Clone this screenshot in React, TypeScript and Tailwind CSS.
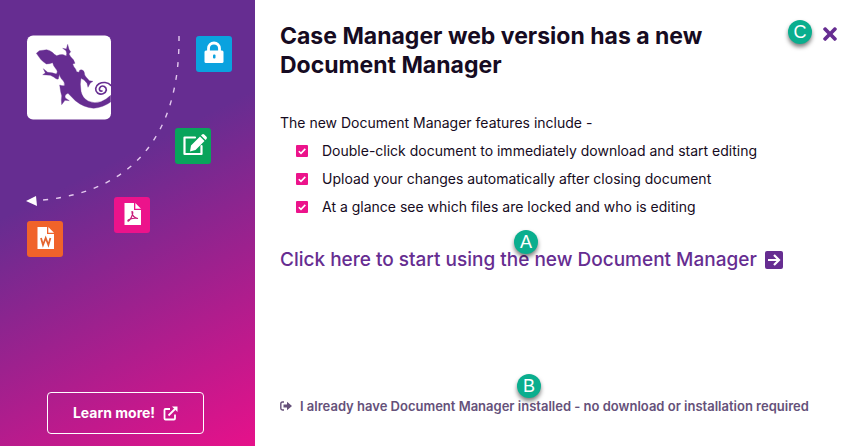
import type { ReactNode } from "react";
import { FaTimes } from "react-icons/fa";

interface IconTileProps {
  x: number;
  y: number;
  color: string;
  children: ReactNode;
}

const IconTile = ({ x, y, color, children }: IconTileProps) => (
  <g transform={`translate(${x} ${y})`}>
    <rect width="36" height="36" rx="3" fill={color} />
    {children}
  </g>
);

const FilePage = () => (
  <>
    <path d="M10.500 6h9.500v7h7v15h-16.500z" fill="#fff" />
    <path d="M21.300 6l5.700 5.700h-5.700z" fill="#fff" />
  </>
);

const Lizard = () => (
  <g transform="translate(26 34) scale(.33333)" fill="#662d91" stroke="#662d91" strokeLinejoin="round">
    <path d="M31 58L40 50Q52 49 62 47Q72 49 79 55Q85 62 92 65Q103 61 112 62L121 66L122 58L120 50L110 43L121 45L125 31L129 46L134 53L129 60L134 68Q143 75 147 88L140 90L144 99Q151 106 152 113L159 115Q159 108 165 107Q174 108 175 116Q175 124 180 129Q186 135 190 140L201 142L193 147L186 160L183 148Q178 138 165 133Q161 150 165 172Q169 192 186 201Q204 210 225 203Q241 197 254 184V204Q232 220 203 223Q172 220 148 200L126 178Q119 180 117 186L118 192L130 200L117 199L107 212L106 198Q109 184 104 173L101 153Q107 156 115 155Q118 144 106 134Q101 128 100 121L97 135Q91 137 83 129L73 124L50 122L58 117L52 104L65 115Q80 116 91 120Q97 112 90 105L83 95L80 86Q70 90 61 90L50 82L44 76Z" />
    <path
      d="M254 154C246 143 229 144 219 149C207 156 206 170 215 177C225 184 239 179 241 168C241 158 231 153 224 158C217 164 220 173 228 171"
      fill="none"
      strokeWidth="5"
      strokeLinecap="round"
    />
  </g>
);

const Illustration = () => (
  <svg viewBox="0 0 255 270" className="w-full" aria-hidden="true">
    <rect x="27" y="35.500" width="84" height="84" rx="6" fill="#fff" />
    <Lizard />
    <path
      d="M179 36C180 134 134 191 43 200"
      fill="none"
      stroke="#e3c9ee"
      strokeWidth="1.400"
      strokeDasharray="5 8"
    />
    <path d="M26 201l10-5 1 10z" fill="#fff" />
    <IconTile x={196} y={36} color="#0aa2df">
      <path d="M12.500 15V12.500a5.500 5.500 0 0 1 11 0V15" fill="none" stroke="#fff" strokeWidth="2.800" />
      <path d="M10 14.500h16q1.500 0 1.500 1.500v9.500q0 1.500-1.500 1.500h-16q-1.500 0-1.500-1.500v-9.500q0-1.500 1.500-1.500z" fill="#fff" />
      <rect x="17" y="18.500" width="2.500" height="4" rx="1" fill="#0aa2df" />
    </IconTile>
    <IconTile x={175} y={128} color="#08a45b">
      <path d="M20 9.500h-10.500v16.500h17v-8" fill="none" stroke="#fff" strokeWidth="2.200" strokeLinejoin="round" strokeLinecap="round" />
      <path d="M25 8.500l4.500 4.500-9 9-5.500 1.500 1-6zM26 7.500l1-1q1.200-1 2.200 0l2.300 2.300q1 1 0 2.200l-1 1z" fill="#fff" />
    </IconTile>
    <IconTile x={114} y={197} color="#ec138b">
      <FilePage />
      <path d="M18 14.500c1.500 0 .5 3-.5 5.500s-3 4.500-3.500 4c-1-1 4-3.500 10-2.500-3 0-6.500-3-6-7z" fill="none" stroke="#c71c78" strokeWidth="1.200" />
    </IconTile>
    <IconTile x={27} y={221} color="#f0632a">
      <FilePage />
      <path d="M14 17l2 7 2.700-7 2.700 7 2-7" fill="none" stroke="#e4652f" strokeWidth="1.800" />
    </IconTile>
  </svg>
);

const ExternalLinkIcon = () => (
  <svg viewBox="0 0 15 15" className="size-[15px]" fill="none" stroke="currentColor" strokeWidth="1.800" aria-hidden="true">
    <path d="M7 3H2.500Q1.500 3 1.500 4V12.500Q1.500 13.500 2.500 13.500H11Q12 13.500 12 12.500V8.500" />
    <path d="M5.500 9.500L12 3" />
    <path d="M9 .5h5.500V6z" fill="currentColor" stroke="none" />
  </svg>
);

const CheckIcon = () => (
  <svg viewBox="0 0 12 12" className="size-3 shrink-0" aria-hidden="true">
    <rect width="12" height="12" rx="1" fill="#ec138b" />
    <path d="M2.800 6.200l2.200 2.200 4.300-4.500" fill="none" stroke="#fff" strokeWidth="1.600" />
  </svg>
);

const ArrowSquareIcon = () => (
  <svg viewBox="0 0 18 18" className="size-[18px] shrink-0" aria-hidden="true">
    <rect width="18" height="18" rx="2" fill="currentColor" />
    <path d="M3 9h11M9 4l5 5-5 5" fill="none" stroke="#fff" strokeWidth="2.200" />
  </svg>
);

const SignOutIcon = () => (
  <svg viewBox="0 0 12 10" className="h-[10px] w-3 shrink-0" aria-hidden="true">
    <path d="M4 1H2.500Q.8 1 .8 2.700v4.600Q.8 9 2.500 9H4" fill="none" stroke="currentColor" strokeWidth="1.400" />
    <path d="M3.500 3.500H7V.8L12 5 7 9.200V6.500H3.500z" fill="currentColor" />
  </svg>
);

const Marker = ({ letter, className }: { letter: string; className: string }) => (
  <span
    className={`absolute flex size-6 items-center justify-center rounded-full bg-[#0aae8e] font-['Liberation_Sans'] text-lg font-normal text-white shadow-[0_3px_4px_rgba(0,0,0,0.5)] ${className}`}
  >
    {letter}
  </span>
);

const features = [
  "Double-click document to immediately download and start editing",
  "Upload your changes automatically after closing document",
  "At a glance see which files are locked and who is editing",
];

const App = () => {
  return (
    <div className="flex min-h-screen bg-white font-['Inter',sans-serif] text-[#160b22]">
      <aside className="flex w-[255px] shrink-0 flex-col items-center justify-between bg-[linear-gradient(153deg,#662d91_38%,#e6118a_100%)] pb-3">
        <Illustration />
        <a
          href="#learn-more"
          className="mr-1 flex h-[42px] w-[157px] items-center justify-center gap-2 rounded border border-white text-sm font-bold text-white"
        >
          Learn more!
          <ExternalLinkIcon />
        </a>
      </aside>

      <main className="flex min-w-0 flex-1 flex-col pt-[22px] pr-[11px] pb-8 pl-[25px]">
        <header className="flex items-start justify-between gap-4">
          <h1 className="max-w-[460px] text-[23px] leading-[29px] font-bold">
            Case Manager web version has a new Document Manager
          </h1>
          <button type="button" aria-label="Close" className="relative mt-[2px] text-[#662d91]">
            <FaTimes className="size-5" />
            <Marker letter="C" className="-top-1 right-7" />
          </button>
        </header>

        <section className="mt-[29px] text-sm leading-7">
          <p>The new Document Manager features include -</p>
          <ul className="pl-4">
            {features.map((feature) => (
              <li key={feature} className="flex items-center gap-[14px]">
                <CheckIcon />
                {feature}
              </li>
            ))}
          </ul>
        </section>

        <a
          href="#start"
          className="relative mt-[25px] flex items-center gap-2 self-start text-[19px] leading-7 font-medium text-[#662d91]"
        >
          Click here to start using the new Document Manager
          <ArrowSquareIcon />
          <Marker letter="A" className="-top-4 left-[234px]" />
        </a>

        <a
          href="#installed"
          className="relative mt-auto flex items-center gap-2 self-start text-[13px] leading-4 font-semibold text-[#65517a]"
        >
          <SignOutIcon />
          I already have Document Manager installed - no download or installation required
          <Marker letter="B" className="-top-6 left-[237px]" />
        </a>
      </main>
    </div>
  );
};

export default App;
